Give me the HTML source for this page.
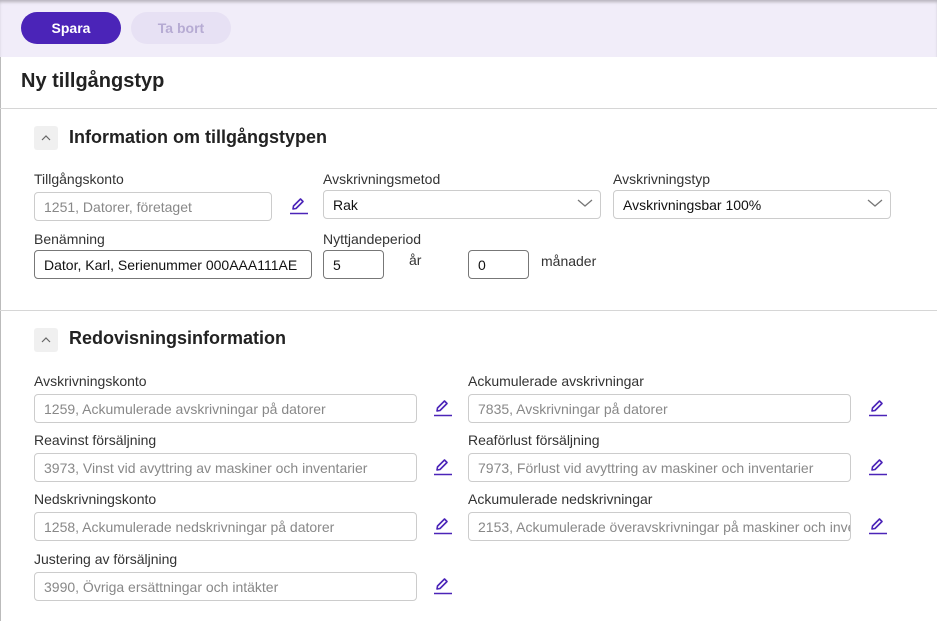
<!DOCTYPE html><html><head><meta charset="utf-8"><style>
*{box-sizing:border-box;margin:0;padding:0}
body{width:937px;height:621px;overflow:hidden;background:#fff;font-family:"Liberation Sans",sans-serif;color:#222;position:relative}
.a{position:absolute}
.top{left:0;top:0;width:937px;height:57px;background:#f1edf9;box-shadow:inset 0 3px 3px -1px rgba(0,0,0,.25)}
.btn{height:32px;top:12px;width:100px;border-radius:16px;font-size:14px;font-weight:bold;display:flex;align-items:center;justify-content:center}
.lbl{font-size:14px;color:#333}
.in{height:29px;border:1px solid #ccc;border-radius:4px;font-size:14px;color:#888;padding:0 9px;display:flex;align-items:center;white-space:nowrap;overflow:hidden;background:#fff}
.dk{border-color:#777;color:#111}
.hr{left:0;width:937px;height:1px;background:#d6d6d6}
.chev{width:24px;height:24px;background:#f0f0f0;border-radius:3px;display:flex;align-items:center;justify-content:center}
.h2{font-size:18px;font-weight:bold;color:#222}
</style></head><body>
<div class="a top"></div>
<div class="a" style="left:0;top:57px;width:1px;height:564px;background:#bbb"></div>
<div class="a btn" style="left:21px;background:#4b24b8;color:#fff">Spara</div>
<div class="a btn" style="left:131px;background:#e7e1f4;color:#b6abd3">Ta bort</div>
<div class="a" style="left:21px;top:70px;font-size:20px;font-weight:bold;color:#222">Ny tillgångstyp</div>
<div class="a hr" style="top:108px"></div>
<div class="a chev" style="left:34px;top:126px"><svg width="10" height="6"><path d="M1 5L5 1L9 5" fill="none" stroke="#666" stroke-width="1.2"/></svg></div>
<div class="a h2" style="left:69px;top:127px">Information om tillgångstypen</div>
<div class="a lbl" style="left:34px;top:171px">Tillgångskonto</div>
<div class="a in" style="left:34px;top:192px;width:238px">1251, Datorer, företaget</div>
<div class="a lbl" style="left:323px;top:171px">Avskrivningsmetod</div>
<div class="a in dk" style="left:323px;top:190px;width:278px;border-color:#ccc">Rak</div>
<div class="a lbl" style="left:613px;top:171px">Avskrivningstyp</div>
<div class="a in dk" style="left:613px;top:190px;width:278px;border-color:#ccc">Avskrivningsbar 100%</div>
<svg class="a" style="left:577px;top:198px" width="16" height="10"><path d="M1 2L8 8L15 2" fill="none" stroke="#777" stroke-width="1.3"/></svg>
<svg class="a" style="left:867px;top:198px" width="16" height="10"><path d="M1 2L8 8L15 2" fill="none" stroke="#777" stroke-width="1.3"/></svg>
<div class="a lbl" style="left:34px;top:231px">Benämning</div>
<div class="a in dk" style="left:34px;top:250px;width:278px">Dator, Karl, Serienummer 000AAA111AE</div>
<div class="a lbl" style="left:323px;top:231px">Nyttjandeperiod</div>
<div class="a in dk" style="left:323px;top:250px;width:61px">5</div>
<div class="a lbl" style="left:409px;top:252px">år</div>
<div class="a in dk" style="left:468px;top:250px;width:61px">0</div>
<div class="a lbl" style="left:541px;top:253px">månader</div>
<div class="a hr" style="top:310px"></div>
<div class="a chev" style="left:34px;top:328px"><svg width="10" height="6"><path d="M1 5L5 1L9 5" fill="none" stroke="#666" stroke-width="1.2"/></svg></div>
<div class="a h2" style="left:69px;top:328px">Redovisningsinformation</div>

<div class="a lbl" style="left:34px;top:373px">Avskrivningskonto</div>
<div class="a in" style="left:34px;top:394px;width:383px">1259, Ackumulerade avskrivningar på datorer</div>
<div class="a lbl" style="left:468px;top:373px">Ackumulerade avskrivningar</div>
<div class="a in" style="left:468px;top:394px;width:383px">7835, Avskrivningar på datorer</div>
<div class="a lbl" style="left:34px;top:432px">Reavinst försäljning</div>
<div class="a in" style="left:34px;top:453px;width:383px">3973, Vinst vid avyttring av maskiner och inventarier</div>
<div class="a lbl" style="left:468px;top:432px">Reaförlust försäljning</div>
<div class="a in" style="left:468px;top:453px;width:383px">7973, Förlust vid avyttring av maskiner och inventarier</div>
<div class="a lbl" style="left:34px;top:491px">Nedskrivningskonto</div>
<div class="a in" style="left:34px;top:512px;width:383px">1258, Ackumulerade nedskrivningar på datorer</div>
<div class="a lbl" style="left:468px;top:491px">Ackumulerade nedskrivningar</div>
<div class="a in" style="left:468px;top:512px;width:383px">2153, Ackumulerade överavskrivningar på maskiner och inventarier</div>
<div class="a lbl" style="left:34px;top:551px">Justering av försäljning</div>
<div class="a in" style="left:34px;top:572px;width:383px">3990, Övriga ersättningar och intäkter</div>

<svg width="0" height="0" style="position:absolute"><defs><g id="p"><path d="M4 13L4.5 10L11.5 3L14 5.5L7 12.5Z" fill="none" stroke="#4b24b8" stroke-width="1.6" stroke-linejoin="round"/><path d="M1 17.5H19" stroke="#4b24b8" stroke-width="1.6"/></g></defs></svg>
<svg class="a" style="left:289px;top:196px" width="20" height="20"><use href="#p"/></svg>
<svg class="a" style="left:433px;top:398px" width="20" height="20"><use href="#p"/></svg>
<svg class="a" style="left:868px;top:398px" width="20" height="20"><use href="#p"/></svg>
<svg class="a" style="left:433px;top:457px" width="20" height="20"><use href="#p"/></svg>
<svg class="a" style="left:868px;top:457px" width="20" height="20"><use href="#p"/></svg>
<svg class="a" style="left:433px;top:516px" width="20" height="20"><use href="#p"/></svg>
<svg class="a" style="left:868px;top:516px" width="20" height="20"><use href="#p"/></svg>
<svg class="a" style="left:433px;top:576px" width="20" height="20"><use href="#p"/></svg>
</body></html>
